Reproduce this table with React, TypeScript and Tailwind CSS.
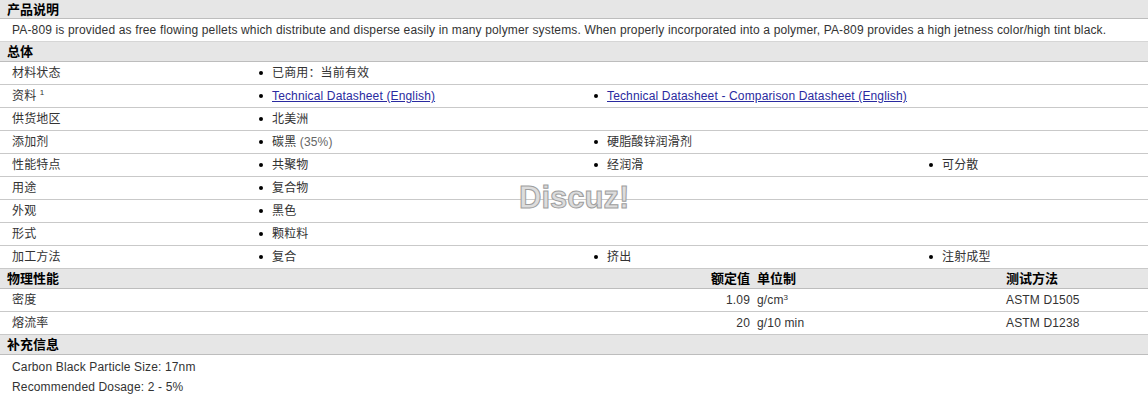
import type { ReactNode } from "react";

const font = "font-['Liberation_Sans','Noto_Sans_CJK_SC',sans-serif]";

function SectionHead({ children }: { children: ReactNode }) {
  return (
    <div className="flex h-[20px] items-center border-b border-[#bdbdbd] bg-[#e6e6e6] pl-[7px] text-[13px] font-bold tracking-normal text-black">
      {children}
    </div>
  );
}

function Bullet({ children }: { children: ReactNode }) {
  return (
    <div className="flex items-center">
      <span className="ml-[6px] mr-[9px] h-[4px] w-[4px] rounded-full bg-black" />
      <span>{children}</span>
    </div>
  );
}

function Row({ label, values }: { label: ReactNode; values: ReactNode[] }) {
  return (
    <div className="grid h-[23px] grid-cols-[253px_335px_335px_1fr] items-center border-b border-[#c9c9c9]">
      <div className="pl-[12px]">{label}</div>
      {values.map((v, i) => (
        <Bullet key={i}>{v}</Bullet>
      ))}
    </div>
  );
}

function Link({ children }: { children: ReactNode }) {
  return <a href="#" className="text-[#2a2aa0] underline">{children}</a>;
}

function PropRow({ label, value, unit, method }: { label: string; value: string; unit: ReactNode; method: string }) {
  return (
    <div className="grid h-[23px] grid-cols-[650px_100px_256px_1fr] items-center border-b border-[#c9c9c9]">
      <div className="pl-[12px]">{label}</div>
      <div className="text-right">{value}</div>
      <div className="pl-[7px]">{unit}</div>
      <div>{method}</div>
    </div>
  );
}

export default function App() {
  return (
    <div className={`relative w-[1148px] h-[395px] overflow-hidden bg-white text-[12px] leading-none tracking-[0.15px] text-[#333] ${font}`}>
      <div className="flex h-[19px] items-center border-b border-[#bdbdbd] bg-[#e6e6e6] pl-[7px] text-[13px] font-bold tracking-normal text-black">
        产品说明
      </div>
      <div className="flex h-[23px] items-center border-b border-[#d6d6d6] pl-[12px]">
        PA-809 is provided as free flowing pellets which distribute and disperse easily in many polymer systems. When properly incorporated into a polymer, PA-809 provides a high jetness color/high tint black.
      </div>

      <SectionHead>总体</SectionHead>
      <Row label="材料状态" values={["已商用：当前有效"]} />
      <Row
        label={
          <span>
            资料 <span className="relative -top-[5px] text-[8px]">1</span>
          </span>
        }
        values={[
          <Link>Technical Datasheet (English)</Link>,
          <Link>Technical Datasheet - Comparison Datasheet (English)</Link>,
        ]}
      />
      <Row label="供货地区" values={["北美洲"]} />
      <Row
        label="添加剂"
        values={[
          <span>
            碳黑 <span className="text-[#666]">(35%)</span>
          </span>,
          "硬脂酸锌润滑剂",
        ]}
      />
      <Row label="性能特点" values={["共聚物", "经润滑", "可分散"]} />
      <Row label="用途" values={["复合物"]} />
      <Row label="外观" values={["黑色"]} />
      <Row label="形式" values={["颗粒料"]} />
      <Row label="加工方法" values={["复合", "挤出", "注射成型"]} />

      <div className="grid h-[20px] grid-cols-[650px_100px_256px_1fr] items-center border-b border-[#bdbdbd] bg-[#e6e6e6] text-[13px] font-bold tracking-normal text-black">
        <div className="pl-[7px]">物理性能</div>
        <div className="text-right">额定值</div>
        <div className="pl-[7px]">单位制</div>
        <div>测试方法</div>
      </div>
      <PropRow
        label="密度"
        value="1.09"
        unit={
          <span>
            g/cm<sup className="text-[8px]">3</sup>
          </span>
        }
        method="ASTM D1505"
      />
      <PropRow label="熔流率" value="20" unit="g/10 min" method="ASTM D1238" />

      <SectionHead>补充信息</SectionHead>
      <div className="pt-[2px] pl-[12px]">
        <div className="flex h-[20px] items-center">Carbon Black Particle Size: 17nm</div>
        <div className="flex h-[20px] items-center">Recommended Dosage: 2 - 5%</div>
      </div>

      <div className="pointer-events-none absolute left-[519px] top-[182px] font-['Liberation_Sans',sans-serif] text-[31px] font-bold leading-none tracking-normal text-[#dcdcdc] [-webkit-text-stroke:1px_#9e9e9e]">
        Discuz!
      </div>
    </div>
  );
}
